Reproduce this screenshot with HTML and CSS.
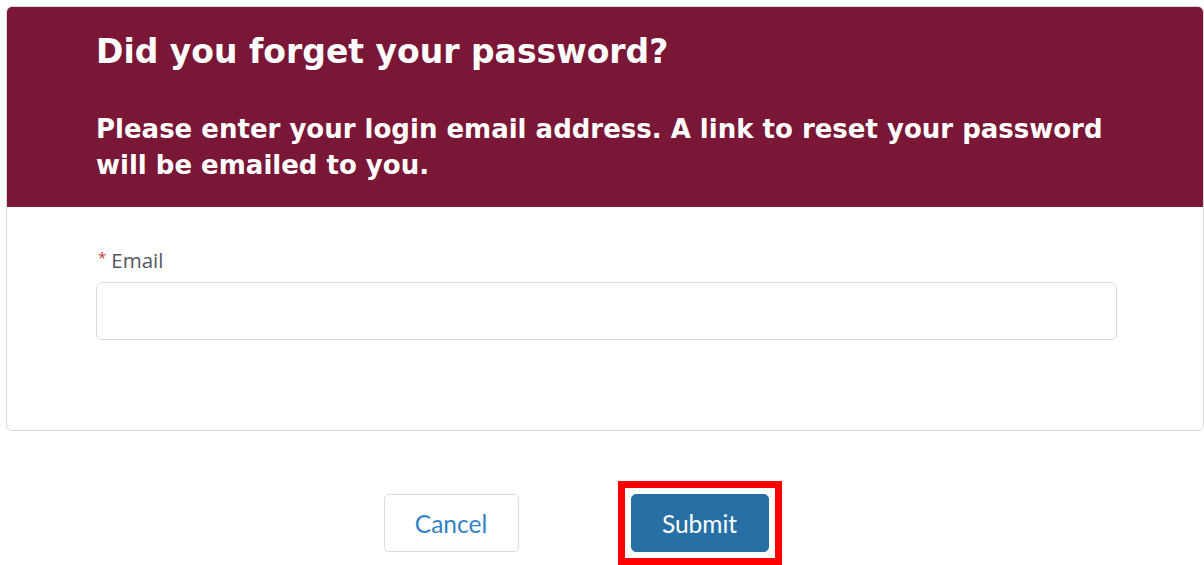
FILE: index.html
```html
<!DOCTYPE html>
<html lang="en">
<head>
<meta charset="utf-8">
<title>Forgot Password</title>
<link rel="stylesheet" href="styles.css">
</head>
<body>
<main class="page">
  <section class="card">
    <header class="card-header">
      <h1 class="title">Did you forget your password?</h1>
      <p class="intro">Please enter your login email address. A link to reset your password will be emailed to you.</p>
    </header>
    <div class="card-body">
      <label class="field-label" for="email"><abbr class="required" title="required">*</abbr>Email</label>
      <input class="field-input" id="email" type="email">
    </div>
  </section>
  <div class="actions">
    <button class="btn btn-neutral" type="button">Cancel</button>
    <button class="btn btn-brand btn-highlight" type="submit">Submit</button>
  </div>
</main>
</body>
</html>
```

FILE: styles.css
```css
html, body {
  margin: 0;
  padding: 0;
  background: #ffffff;
}

.page {
  padding: 6px 0 0 6px;
  width: 1198px;
  height: 559px;
  overflow: hidden;
}

.card {
  border: 1px solid #d9d9d9;
  border-radius: 6px;
  overflow: hidden;
  background: #fff;
}

.card-header {
  background: #7a1737;
  color: #ffffff;
  height: 200px;
  box-sizing: border-box;
  padding: 24px 40px 0 89px;
  font-family: "DejaVu Sans", "Open Sans", sans-serif;
}

.title {
  margin: 0;
  font-size: 33px;
  line-height: 42px;
  font-weight: 700;
}

.intro {
  margin: 38px 0 0;
  font-size: 26px;
  line-height: 36px;
  font-weight: 700;
  max-width: 1030px;
}

.card-body {
  height: 223px;
  box-sizing: border-box;
  padding: 40px 86px 0 89px;
  font-family: "Open Sans", sans-serif;
}

.field-label {
  display: flex;
  align-items: flex-start;
  font-size: 20.5px;
  line-height: 27px;
  color: #54585c;
}

.required {
  color: #c23934;
  text-decoration: none;
  font-size: 15px;
  margin: 0 5px 0 2px;
  line-height: 20px;
}

.field-input {
  display: block;
  margin-top: 8px;
  width: 100%;
  height: 58px;
  box-sizing: border-box;
  border: 1.5px solid #dcdcdc;
  border-radius: 6px;
  background: #fff;
}

.actions {
  display: flex;
  justify-content: center;
  gap: 112px;
  padding: 63px 58px 0 0;
}

.btn {
  height: 58px;
  box-sizing: border-box;
  border-radius: 5px;
  font-family: "Lato", sans-serif;
  font-size: 24.5px;
  padding: 0;
  cursor: pointer;
}

.btn-neutral {
  width: 135px;
  background: #ffffff;
  border: 1.5px solid #d8dde6;
  color: #3482c6;
}

.btn-brand {
  width: 138px;
  background: #2670a6;
  border: 1px solid #2670a6;
  color: #ffffff;
}

/* square red frame drawn around the submit button */
.btn-highlight {
  position: relative;
}

.btn-highlight::after {
  content: "";
  position: absolute;
  inset: -14px;
  border: 7px solid #ff0000;
  pointer-events: none;
}
```
